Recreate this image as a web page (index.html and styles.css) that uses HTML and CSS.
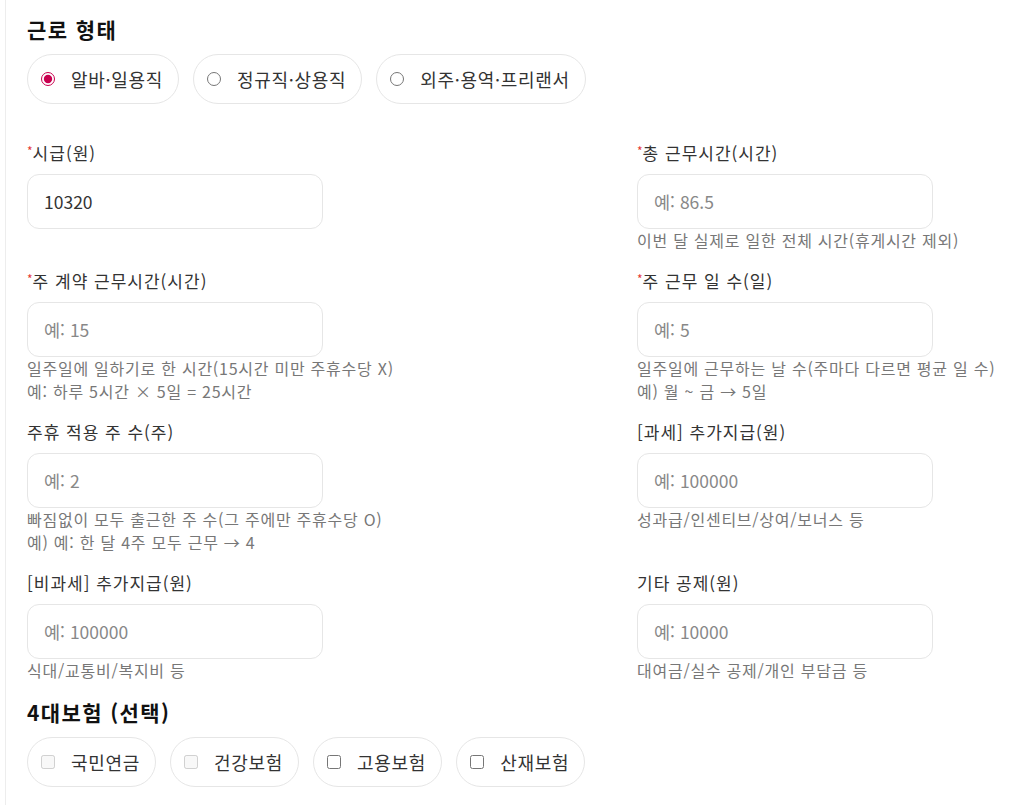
FILE: index.html
```html
<!DOCTYPE html>
<html lang="ko">
<head>
    <meta charset="UTF-8">
    <title>급여 계산기</title>
    <link rel="stylesheet" href="styles.css">
</head>
<body>
    <div class="panel">
        <h2 class="section-title">근로 형태</h2>
        <div class="pill-row">
            <label class="pill"><input type="radio" name="worktype" checked> 알바·일용직</label>
            <label class="pill"><input type="radio" name="worktype"> 정규직·상용직</label>
            <label class="pill"><input type="radio" name="worktype"> 외주·용역·프리랜서</label>
        </div>

        <div class="form-grid">
            <div class="field">
                <label class="field-label"><span class="req">*</span>시급(원)</label>
                <input class="text-input" type="text" value="10320">
            </div>
            <div class="field">
                <label class="field-label"><span class="req">*</span>총 근무시간(시간)</label>
                <input class="text-input" type="text" placeholder="예: 86.5">
                <div class="hint">이번 달 실제로 일한 전체 시간(휴게시간 제외)</div>
            </div>

            <div class="field">
                <label class="field-label"><span class="req">*</span>주 계약 근무시간(시간)</label>
                <input class="text-input" type="text" placeholder="예: 15">
                <div class="hint">일주일에 일하기로 한 시간(15시간 미만 주휴수당 X)<br>예: 하루 5시간 × 5일 = 25시간</div>
            </div>
            <div class="field">
                <label class="field-label"><span class="req">*</span>주 근무 일 수(일)</label>
                <input class="text-input" type="text" placeholder="예: 5">
                <div class="hint">일주일에 근무하는 날 수(주마다 다르면 평균 일 수)<br>예) 월 ~ 금 → 5일</div>
            </div>

            <div class="field">
                <label class="field-label">주휴 적용 주 수(주)</label>
                <input class="text-input" type="text" placeholder="예: 2">
                <div class="hint">빠짐없이 모두 출근한 주 수(그 주에만 주휴수당 O)<br>예) 예: 한 달 4주 모두 근무 → 4</div>
            </div>
            <div class="field">
                <label class="field-label">[과세] 추가지급(원)</label>
                <input class="text-input" type="text" placeholder="예: 100000">
                <div class="hint">성과급/인센티브/상여/보너스 등</div>
            </div>

            <div class="field">
                <label class="field-label">[비과세] 추가지급(원)</label>
                <input class="text-input" type="text" placeholder="예: 100000">
                <div class="hint">식대/교통비/복지비 등</div>
            </div>
            <div class="field">
                <label class="field-label">기타 공제(원)</label>
                <input class="text-input" type="text" placeholder="예: 10000">
                <div class="hint">대여금/실수 공제/개인 부담금 등</div>
            </div>
        </div>

        <h2 class="section-title">4대보험 (선택)</h2>
        <div class="pill-row">
            <label class="pill"><input type="checkbox" disabled> 국민연금</label>
            <label class="pill"><input type="checkbox" disabled> 건강보험</label>
            <label class="pill"><input type="checkbox"> 고용보험</label>
            <label class="pill"><input type="checkbox"> 산재보험</label>
        </div>
    </div>
</body>
</html>
```

FILE: styles.css
```css
body {
    margin: 0;
    background-color: #fff;
    color: #222;
    font-family: "Noto Sans CJK KR", "Noto Sans", sans-serif;
}
.panel {
    margin-left: 5px;
    border-left: 1px solid #ededed;
    padding: 14px 0 20px 21px;
    min-height: 100vh;
    box-sizing: border-box;
}
.section-title {
    font-size: 21px;
    font-weight: 700;
    letter-spacing: 1.4px;
    line-height: 30px;
    margin: 0 0 10px;
    color: #111;
}
.pill-row {
    display: flex;
    gap: 14px;
}
.pill {
    display: flex;
    align-items: center;
    gap: 16px;
    height: 48px;
    padding: 0 15px 0 13px;
    border: 1px solid #e6e6e6;
    border-radius: 25px;
    font-size: 18px;
    letter-spacing: 0.7px;
    color: #333;
    cursor: pointer;
}
.pill input {
    margin: 0;
    width: 14px;
    height: 14px;
    accent-color: #c8004f;
}
.form-grid {
    display: grid;
    grid-template-columns: 610px 1fr;
    row-gap: 16px;
    margin: 37px 0 15px;
}
.field {
    display: flex;
    flex-direction: column;
}
.field-label {
    font-size: 17px;
    letter-spacing: 1px;
    line-height: 24px;
    color: #333;
    margin-bottom: 9px;
}
.req {
    color: #e53935;
    font-size: 12px;
    vertical-align: top;
    line-height: 20px;
    letter-spacing: 0;
}
.text-input {
    width: 296px;
    height: 55px;
    box-sizing: border-box;
    border: 1px solid #e6e6e6;
    border-radius: 12px;
    padding: 0 16px;
    font-family: inherit;
    font-size: 17.5px;
    color: #333;
    outline: none;
}
.text-input::placeholder {
    color: #888;
}
.hint {
    font-size: 16px;
    letter-spacing: 0.75px;
    line-height: 23.5px;
    color: #777;
}
```
